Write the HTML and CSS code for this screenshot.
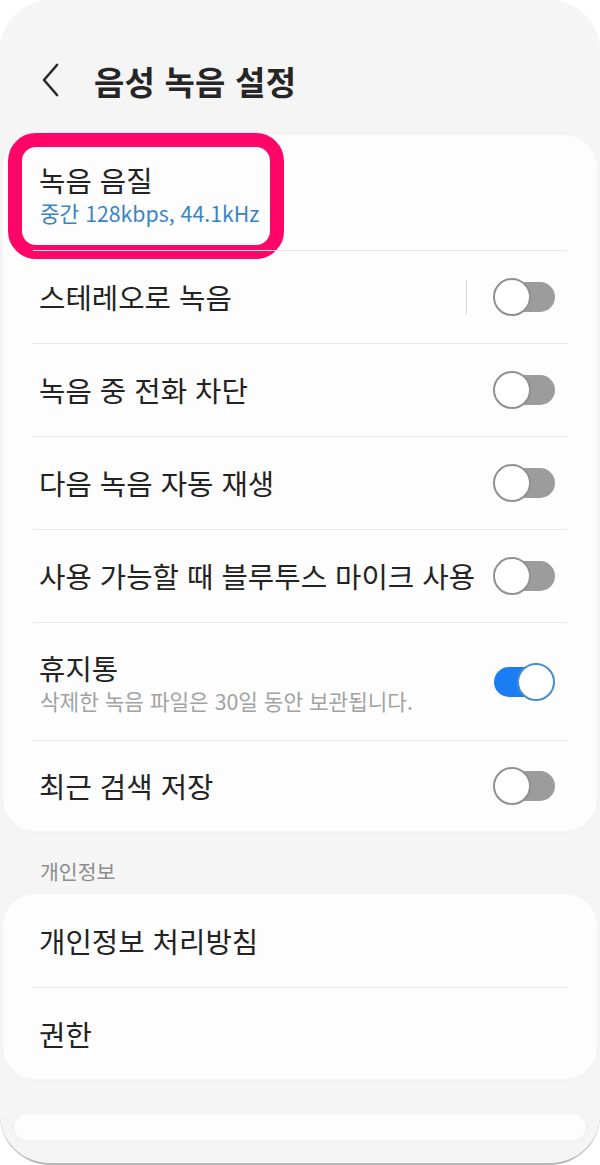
FILE: index.html
```html
<!DOCTYPE html>
<html lang="ko">
<head>
<meta charset="utf-8">
<title>음성 녹음 설정</title>
<link rel="stylesheet" href="styles.css">
</head>
<body>
<div class="frame">
  <header class="appbar">
    <svg class="back" width="20" height="34" viewBox="0 0 20 34"><path d="M17 2 L4 17 L17 32" fill="none" stroke="#2a2a2a" stroke-width="2.6" stroke-linecap="round" stroke-linejoin="round"/></svg>
    <h1 class="title">음성 녹음 설정</h1>
  </header>

  <section class="card">
    <div class="row row-quality">
      <div class="texts">
        <div class="label">녹음 음질</div>
        <div class="sub sub-blue">중간 128kbps, 44.1kHz</div>
      </div>
      <div class="highlight"></div>
    </div>
    <div class="row">
      <div class="label">스테레오로 녹음</div>
      <div class="vdiv"></div>
      <div class="toggle"><span class="track"></span><span class="thumb"></span></div>
    </div>
    <div class="row">
      <div class="label">녹음 중 전화 차단</div>
      <div class="toggle"><span class="track"></span><span class="thumb"></span></div>
    </div>
    <div class="row">
      <div class="label">다음 녹음 자동 재생</div>
      <div class="toggle"><span class="track"></span><span class="thumb"></span></div>
    </div>
    <div class="row">
      <div class="label">사용 가능할 때 블루투스 마이크 사용</div>
      <div class="toggle"><span class="track"></span><span class="thumb"></span></div>
    </div>
    <div class="row row-trash">
      <div class="texts">
        <div class="label">휴지통</div>
        <div class="sub sub-gray">삭제한 녹음 파일은 30일 동안 보관됩니다.</div>
      </div>
      <div class="toggle on"><span class="track"></span><span class="thumb"></span></div>
    </div>
    <div class="row row-last">
      <div class="label">최근 검색 저장</div>
      <div class="toggle"><span class="track"></span><span class="thumb"></span></div>
    </div>
  </section>

  <div class="section-title">개인정보</div>

  <section class="card">
    <div class="row">
      <div class="label">개인정보 처리방침</div>
    </div>
    <div class="row row-last2">
      <div class="label">권한</div>
    </div>
  </section>

  <section class="card card-peek"></section>
</div>
</body>
</html>
```

FILE: styles.css
```css
* { box-sizing: border-box; }
html, body { margin: 0; padding: 0; background: #ffffff; }
body {
  width: 600px;
  height: 1165px;
  overflow: hidden;
  font-family: "Noto Sans CJK KR", "Noto Sans", sans-serif;
  color: #252525;
}
.frame {
  width: 600px;
  height: 1165px;
  background: #f5f5f6;
  border-radius: 50px;
  border-bottom: 2px solid #b9b9b9;
  overflow: hidden;
}
.appbar {
  display: flex;
  align-items: flex-start;
  height: 135px;
  padding: 63px 0 0 40px;
}
.back { margin-right: 34px; flex: none; }
.title {
  margin: -4px 0 0 0;
  font-size: 33px;
  line-height: 44px;
  font-weight: 700;
  color: #262626;
  letter-spacing: 0.2px;
}
.card {
  margin: 0 3px;
  background: #fdfdfd;
  border-radius: 32px;
  padding: 0 30px;
  box-shadow: 0 0 6px rgba(0,0,0,0.025);
}
.row {
  position: relative;
  display: flex;
  align-items: center;
  height: 93px;
  border-top: 1px solid #e6e6e6;
}
.row:first-child { border-top: none; }
.label {
  font-size: 28.7px;
  line-height: 36px;
  color: #232323;
  flex: 1;
  white-space: nowrap;
  padding-left: 6px;
}
.texts { flex: 1; display: flex; flex-direction: column; }
.sub { font-size: 21.3px; line-height: 28px; margin-top: 1px; padding-left: 7px; }
.sub-blue { color: #3b84c4; }
.sub-gray { color: #a2a2a2; }
.row-quality { height: 115px; align-items: flex-start; padding-top: 27px; }
.row-trash { height: 118px; align-items: flex-start; padding-top: 27px; }
.row-trash .toggle { margin-top: 13px; }
.row-last { height: 91px; }
.row-last2 { height: 92px; }
.highlight {
  position: absolute;
  left: -25px;
  top: -2px;
  width: 276px;
  height: 126px;
  border: 14px solid #fe0567;
  border-radius: 28px;
}
.vdiv {
  width: 1px;
  height: 34px;
  background: #d9d9d9;
  margin-right: 26px;
}
.toggle {
  position: relative;
  width: 62px;
  height: 38px;
  margin-right: 12px;
  flex: none;
}
.track {
  position: absolute;
  left: 5px;
  top: 4px;
  width: 57px;
  height: 30px;
  border-radius: 15px;
  background: #9c9c9c;
}
.thumb {
  position: absolute;
  left: 0;
  top: 0;
  width: 38px;
  height: 38px;
  border-radius: 50%;
  background: #ffffff;
  border: 2px solid #909090;
}
.toggle.on .track { left: 1px; width: 56px; background: #1a7df4; }
.toggle.on .thumb { left: 24px; border-color: #4a8ccc; }
.section-title {
  height: 63px;
  padding: 26px 0 0 40px;
  font-size: 20.5px;
  line-height: 28px;
  color: #8d8d8d;
}
.card-peek {
  margin: 35px 14px 0;
  height: 26px;
  border-radius: 14px;
  box-shadow: 0 0 8px rgba(0,0,0,0.03);
}
```
